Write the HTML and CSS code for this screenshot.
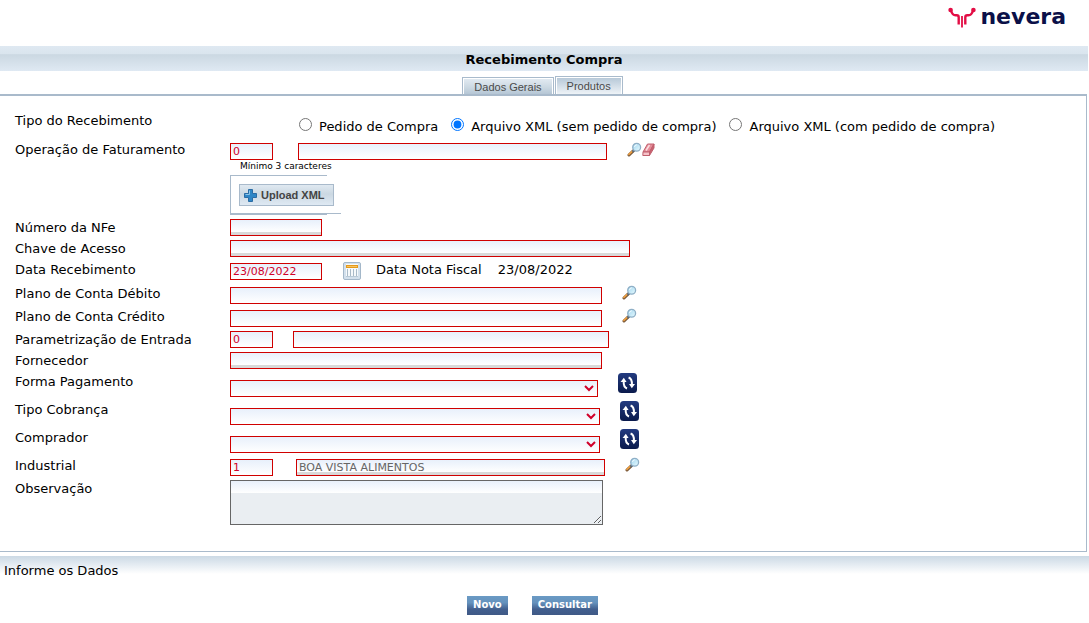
FILE: index.html
```html
<!DOCTYPE html>
<html lang="pt-BR">
<head>
<meta charset="utf-8">
<title>Recebimento Compra</title>
<link rel="stylesheet" href="styles.css">
</head>
<body>
<svg width="0" height="0" class="defs" aria-hidden="true">
  <defs>
    <linearGradient id="lens" x1="0" y1="0" x2="1" y2="1"><stop offset="0" stop-color="#9fd4ee"/><stop offset="1" stop-color="#e8fbff"/></linearGradient>
    <linearGradient id="navy" x1="0" y1="0" x2="0" y2="1"><stop offset="0" stop-color="#233b80"/><stop offset="1" stop-color="#0a1a4c"/></linearGradient>
    <symbol id="search" viewBox="0 0 16 16">
      <path d="M2 14 7 9.200" stroke="#7b5a3a" stroke-width="3" stroke-linecap="round"/>
      <path d="M2 13.200 6 9.500" stroke="#f0a040" stroke-width="1.600" stroke-linecap="round"/>
      <path d="M5.800 10.400 7.600 8.600" stroke="#55697e" stroke-width="2.400"/>
      <circle cx="10.300" cy="5.600" r="4.200" fill="url(#lens)" stroke="#8fafc6" stroke-width="1.400"/>
      <path d="M8 5.200a2.600 2.600 0 0 1 2.400-2.200" fill="none" stroke="#fff" stroke-width="1"/>
    </symbol>
    <symbol id="refresh" viewBox="0 0 20 20">
      <rect width="19" height="20" rx="3.500" fill="url(#navy)"/>
      <path d="M9 15.500C6.400 14.500 5.500 12.500 5.700 8.500" fill="none" stroke="#fff" stroke-width="2"/>
      <path d="M2.600 9 5.800 4.800 8.600 9z" fill="#fff"/>
      <path d="M10.600 4.500c2.600 1 3.500 3 3.300 7" fill="none" stroke="#fff" stroke-width="2"/>
      <path d="M11 11 13.800 15.200 17 11z" fill="#fff"/>
    </symbol>
  </defs>
</svg>

<header class="brand">
  <svg class="brand-mark" width="28" height="21" viewBox="0 0 28 21" aria-hidden="true">
    <g fill="none" stroke="#e30d45">
      <path d="M3 3.500c1 3.500 2 4.800 4.500 4.800h1.200c1.500 0 2 .6 2 2V17.500" stroke-width="2.400"/>
      <path d="M25 3.500c-1 3.500-2 4.800-4.500 4.800h-1.200c-1.500 0-2 .6-2 2V17.500" stroke-width="2.400"/>
      <path d="M14 9v11.500" stroke-width="1.800"/>
    </g>
    <g fill="#e30d45"><circle cx="2.600" cy="3" r="2.300"/><circle cx="25.400" cy="3" r="2.300"/></g>
  </svg>
  <span class="brand-name">nevera</span>
</header>

<h1 class="title">Recebimento Compra</h1>

<nav class="tabs">
  <button type="button" class="tab tab-active">Dados Gerais</button>
  <button type="button" class="tab">Produtos</button>
</nav>

<form class="page-form">
<main class="panel">
  <div class="row row-kind" role="radiogroup" aria-labelledby="kind">
    <span class="label" id="kind">Tipo do Recebimento</span>
    <div class="field radios">
      <label class="radio"><input type="radio" name="kind"><span>Pedido de Compra</span></label>
      <label class="radio"><input type="radio" name="kind" checked><span>Arquivo XML (sem pedido de compra)</span></label>
      <label class="radio"><input type="radio" name="kind"><span>Arquivo XML (com pedido de compra)</span></label>
    </div>
  </div>

  <div class="row row-operation">
    <label class="label" for="op">Operação de Faturamento</label>
    <div class="field lowered">
      <div class="stack">
        <input class="input w-code" id="op" type="text" value="0">
        <small class="hint">Mínimo 3 caracteres</small>
      </div>
      <input class="input w-name gap-25" type="text" aria-label="Descrição da operação">
      <div class="tools gap-20">
        <button type="button" class="icon" aria-label="Pesquisar operação"><svg width="15" height="15"><use href="#search"/></svg></button>
        <button type="button" class="icon" aria-label="Limpar operação">
          <svg width="13" height="16" viewBox="0 0 13 16"><path d="M5.500 3h6.500l-4.500 8H1z" fill="#e58c98" stroke="#c0606e"/><path d="M1 11h6.500v3.500H.8z" fill="#f6c3c9" stroke="#c0606e"/><path d="M7.500 11 12 3v4L7.500 14.500z" fill="#c9616f" stroke="#c0606e"/><path d="M4 9.500 7.500 4" stroke="#fbdde0" stroke-width="1.500"/></svg>
        </button>
      </div>
    </div>
  </div>

  <div class="row row-upload">
    <span class="label"></span>
    <div class="upload-frame"><div class="upload-inner">
      <button type="button" class="upload">
        <svg width="13" height="13" viewBox="0 0 13 13" aria-hidden="true"><path d="M4.500.500h4v4h4v4h-4v4h-4v-4h-4v-4h4z" fill="#2f86c6" stroke="#2a6ca5"/><path d="M5.500 1.500v4h-4" fill="none" stroke="#8cc6ea"/></svg>
        <span>Upload XML</span>
      </button>
    </div></div>
  </div>

  <div class="row">
    <label class="label" for="nfe">Número da NFe</label>
    <div class="field"><input class="input locked w-short" id="nfe" type="text" readonly></div>
  </div>
  <div class="row">
    <label class="label" for="key">Chave de Acesso</label>
    <div class="field"><input class="input locked w-key" id="key" type="text" readonly></div>
  </div>
  <div class="row row-date">
    <label class="label" for="date">Data Recebimento</label>
    <div class="field">
      <input class="input w-short lower" id="date" type="text" value="23/08/2022">
      <button type="button" class="icon gap-20" aria-label="Abrir calendário">
        <svg width="20" height="20" viewBox="0 0 20 20"><rect x="1.500" y="1.500" width="17" height="17" rx="1.500" fill="#d3e0ec" stroke="#a3b7c9"/><rect x="4" y="3" width="12" height="13" fill="#f6f9fb"/><rect x="4" y="4" width="12" height="3" fill="#e59a1c"/><path d="M5 5.500h10" stroke="#f8c460"/><path d="M5.500 8v8M8.500 8v8M11.500 8v8M14.500 8v8" stroke="#a9bac8"/><path d="M4 15.500h12" stroke="#b9c9d6"/></svg>
      </button>
      <span class="invoice-date">Data Nota Fiscal <span>23/08/2022</span></span>
    </div>
  </div>
  <div class="row row-search">
    <label class="label" for="debit">Plano de Conta Débito</label>
    <div class="field lowered"><input class="input w-wide" id="debit" type="text">
      <button type="button" class="icon gap-20" aria-label="Pesquisar conta débito"><svg width="15" height="15"><use href="#search"/></svg></button></div>
  </div>
  <div class="row row-search">
    <label class="label" for="credit">Plano de Conta Crédito</label>
    <div class="field lowered"><input class="input w-wide" id="credit" type="text">
      <button type="button" class="icon gap-20" aria-label="Pesquisar conta crédito"><svg width="15" height="15"><use href="#search"/></svg></button></div>
  </div>
  <div class="row">
    <label class="label" for="param">Parametrização de Entrada</label>
    <div class="field"><input class="input w-code" id="param" type="text" value="0">
      <input class="input w-param gap-20" type="text" aria-label="Descrição da parametrização"></div>
  </div>
  <div class="row">
    <label class="label" for="supplier">Fornecedor</label>
    <div class="field"><input class="input locked w-wide" id="supplier" type="text" readonly></div>
  </div>
  <div class="row row-select">
    <label class="label" for="pay">Forma Pagamento</label>
    <div class="field"><select class="input select w-pay" id="pay"><option></option></select>
      <button type="button" class="icon gap-20" aria-label="Atualizar formas de pagamento"><svg width="20" height="20"><use href="#refresh"/></svg></button></div>
  </div>
  <div class="row row-select">
    <label class="label" for="charge">Tipo Cobrança</label>
    <div class="field"><select class="input select w-select" id="charge"><option></option></select>
      <button type="button" class="icon gap-20" aria-label="Atualizar tipos de cobrança"><svg width="20" height="20"><use href="#refresh"/></svg></button></div>
  </div>
  <div class="row row-select">
    <label class="label" for="buyer">Comprador</label>
    <div class="field"><select class="input select w-select" id="buyer"><option></option></select>
      <button type="button" class="icon gap-20" aria-label="Atualizar compradores"><svg width="20" height="20"><use href="#refresh"/></svg></button></div>
  </div>
  <div class="row row-search">
    <label class="label" for="ind">Industrial</label>
    <div class="field lowered"><input class="input w-code" id="ind" type="text" value="1">
      <input class="input locked w-name gap-23" type="text" value="BOA VISTA ALIMENTOS" readonly aria-label="Nome industrial">
      <button type="button" class="icon gap-20" aria-label="Pesquisar industrial"><svg width="15" height="15"><use href="#search"/></svg></button></div>
  </div>
  <div class="row">
    <label class="label" for="obs">Observação</label>
    <div class="field"><textarea class="notes" id="obs"></textarea></div>
  </div>
</main>

<footer class="footer">
  <p class="status">Informe os Dados</p>
  <div class="actions">
    <button type="button" class="action">Novo</button>
    <button type="button" class="action">Consultar</button>
  </div>
</footer>
</form>
</body>
</html>
```

FILE: styles.css
```css
* { box-sizing: border-box; }

body {
  margin: 0;
  background: #fff;
  color: #000;
  font: 13px/16px "DejaVu Sans", Verdana, sans-serif;
}

button, input, select, textarea { margin: 0; font-family: inherit; }
svg { display: block; }
.defs { position: absolute; }

.brand {
  display: flex;
  justify-content: flex-end;
  align-items: flex-start;
  gap: 4px;
  height: 46px;
  padding: 7px 23px 0 0;
}
.brand-name {
  color: #0b1048;
  font-size: 22px;
  font-weight: bold;
  line-height: 20px;
}

.title {
  margin: 0 1px 0 0;
  height: 25px;
  background: linear-gradient(#dfe9f2 0, #dae5ee 30%, #cbd8e2 35%, #dfe9f3 100%);
  font-size: 13px;
  line-height: 28px;
  text-align: center;
}

.tabs {
  display: flex;
  justify-content: center;
  align-items: flex-end;
  gap: 1px;
  padding: 5px 4px 0 0;
}
.tab {
  height: 18px;
  padding: 0 11px;
  border: 1px solid #a9bbcc;
  border-bottom: 0;
  box-shadow: inset 1px 1px #fff, inset -1px 0 #fff;
  background: linear-gradient(#b4c6d6, #eef3f7);
  color: #4a4a4a;
  font: 11px/18px "Liberation Sans", Arial, sans-serif;
}
.tab-active {
  height: 17px;
  background: linear-gradient(#e4ecf3, #cbd8e2 60%, #b5c6d5);
}

.panel {
  margin-right: 2px;
  padding: 16px 0 26px 15px;
  border: solid #a9bacb;
  border-width: 2px 1px 1px 0;
}

.row {
  display: grid;
  grid-template-columns: 215px 1fr;
  align-items: start;
  min-height: 21px;
}
.row-kind { min-height: 29px; }
.row-operation { min-height: 34px; }
.row-upload { min-height: 44px; }
.row-date { min-height: 24px; }
.row-search { min-height: 23px; }
.row-select { min-height: 28px; }

.label { line-height: 18px; }
.field { display: flex; align-items: flex-start; }
.lowered { padding-top: 2px; }
.lower { margin-top: 2px; }
.lowered .icon { margin-top: -2px; }
.gap-20 { margin-left: 20px; }
.gap-23 { margin-left: 23px; }
.gap-25 { margin-left: 25px; }

.radios { gap: 13px; padding: 6px 0 0 69px; }
.radio { display: flex; gap: 7px; line-height: 18px; white-space: nowrap; }
.radio input { width: 13px; height: 13px; }

.input {
  height: 17px;
  padding: 1px 2px;
  border: 1px solid #d00000;
  border-radius: 0;
  background: linear-gradient(#e8f0fb, #fff);
  color: #d0002a;
  font-size: 11px;
  line-height: 13px;
}
.locked {
  background: linear-gradient(#e8f0fb, #fff 12px, #d9d9d9 12px);
  color: #666;
}
.w-code { width: 43px; }
.w-short { width: 92px; }
.w-name { width: 309px; }
.w-param { width: 316px; }
.w-wide { width: 372px; }
.w-key { width: 400px; }
.w-pay { width: 368px; }
.w-select { width: 370px; }
.select { margin-top: 7px; padding: 0; }

.stack { width: 43px; }
.stack .input { display: block; }
.hint {
  display: block;
  padding-left: 10px;
  font-size: 9px;
  line-height: 12px;
  white-space: nowrap;
}

.icon {
  padding: 0;
  border: 0;
  background: none;
  cursor: pointer;
}
.tools { display: flex; }

.upload-frame {
  width: 97px;
  height: 40px;
  border: 1px solid #a9bacb;
  border-right: 0;
}
.upload-inner {
  width: 110px;
  height: 38px;
  padding: 8px;
  border-bottom: 1px solid #a9bacb;
}
.upload {
  display: flex;
  align-items: center;
  gap: 4px;
  height: 22px;
  padding: 0 8px 0 4px;
  border: 1px solid #a9bacb;
  background: linear-gradient(#e0e9f1, #cbd8e2 45%, #dfe9f3);
  color: #444;
  font: bold 11px/20px "Liberation Sans", Arial, sans-serif;
  white-space: nowrap;
}

.invoice-date { margin-left: 14px; line-height: 18px; white-space: nowrap; }
.invoice-date span { margin-left: 12px; }

.notes {
  width: 373px;
  height: 45px;
  border: 1px solid #666;
  background: linear-gradient(#e8f0fb, #fff 12px, #eaeef2 12px);
}

.footer {
  margin-top: 4px;
  padding: 7px 4px 0;
  background: linear-gradient(#cbd9e5, #fff) top / 100% 18px no-repeat;
}
.status { margin: 0 0 17px; }
.actions {
  display: flex;
  justify-content: center;
  gap: 24px;
  padding-right: 24px;
}
.action {
  height: 19px;
  padding: 0 6px 2px;
  border: 0;
  background: linear-gradient(#6a9ac4 0, #6592bd 35%, #425f8e 70%, #3f5986 100%);
  color: #fff;
  font-size: 10px;
  font-weight: bold;
  line-height: 17px;
}
```
